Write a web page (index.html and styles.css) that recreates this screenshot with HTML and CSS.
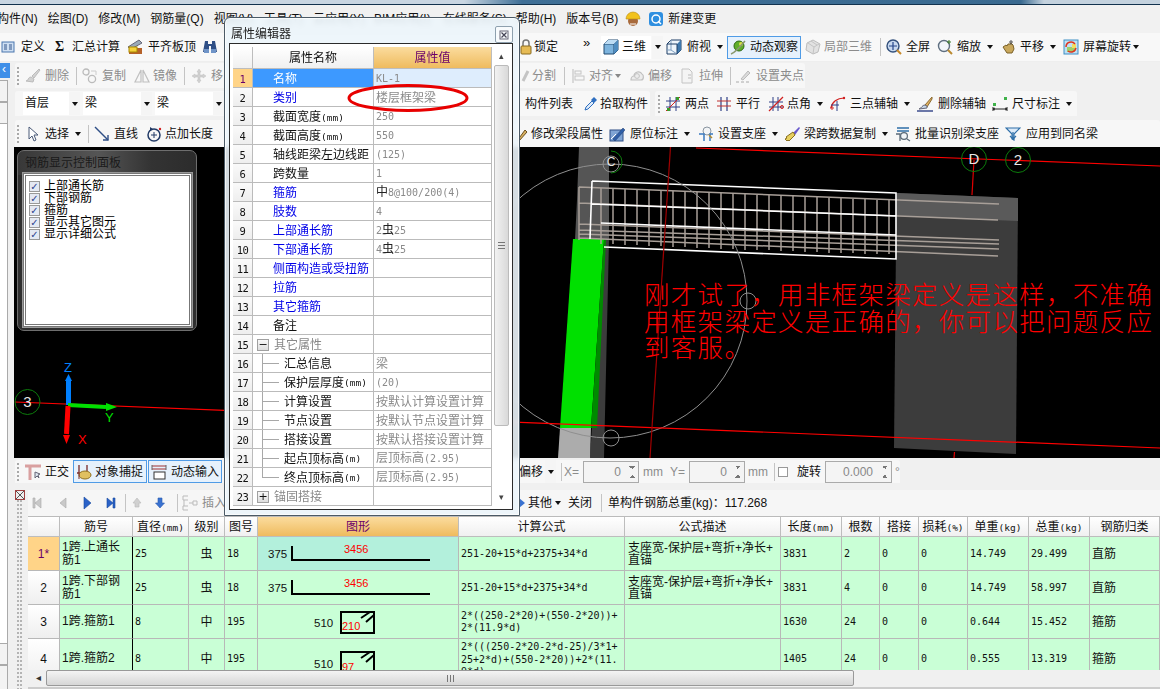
FILE: index.html
```html
<!DOCTYPE html>
<html lang="zh-CN">
<head>
<meta charset="utf-8">
<title>钢筋显示</title>
<link rel="stylesheet" href="styles.css">
</head>
<body>
<svg class="sprite" xmlns="http://www.w3.org/2000/svg">
  <symbol id="def" viewBox="0 0 16 16"><rect x="1" y="3" width="12" height="10" fill="#cfdff2" stroke="#4a76ae"/><path d="M3 6h3M3 8h3M3 10h3M8 6h3M8 8h3M8 10h3" stroke="#33558a"/></symbol>
  <symbol id="level" viewBox="0 0 16 16"><path d="M1 8 12 1l3 3L4 10z" fill="#9aa9b8" stroke="#667"/><rect x="2" y="9" width="13" height="6" fill="#b5622a"/><rect x="2" y="8" width="8" height="5" fill="#f4d23c" stroke="#a80"/></symbol>
  <symbol id="binoc" viewBox="0 0 16 16"><path d="M3 2h3v3h4V2h3l2 11H9V7H7v6H1z" fill="#2f4f86"/><rect x="2" y="10" width="5" height="4" fill="#6f94c8"/><rect x="9" y="10" width="5" height="4" fill="#6f94c8"/></symbol>
  <symbol id="lock" viewBox="0 0 16 16"><path d="M7 7V4a3 3 0 0 1 6 0v3" fill="none" stroke="#777" stroke-width="1.5"/><rect x="5" y="7" width="10" height="8" rx="1" fill="#e6bb55" stroke="#8a6a20"/></symbol>
  <symbol id="cube" viewBox="0 0 16 16"><path d="M1 5l4-4h10v10l-4 4H1z" fill="#7db4de" stroke="#234a70"/><path d="M1 5h10v10M11 5l4-4" fill="none" stroke="#234a70"/><path d="M1 5l4-4h10l-4 4z" fill="#bcdcf4"/><path d="M11 5l4-4v10l-4 4z" fill="#4e8cc0"/></symbol>
  <symbol id="topview" viewBox="0 0 16 16"><path d="M1 5l4-4h10v10l-4 4H1z" fill="#eef5fb" stroke="#1f3f66"/><path d="M5 1v10H1M5 11l6 4" fill="none" stroke="#7f9fc0"/><path d="M11 5l4-4v10l-4 4z" fill="#3f78ac"/><path d="M1 5h10v10" fill="none" stroke="#1f3f66"/></symbol>
  <symbol id="orbit" viewBox="0 0 16 16"><circle cx="9" cy="7" r="5" fill="#5fae2c" stroke="#2e6a16"/><circle cx="11" cy="5" r="2" fill="#d8e04a"/><path d="M1 15C4 14 10 8 15 2" fill="none" stroke="#8a9a70" stroke-width="1.6"/></symbol>
  <symbol id="local3d" viewBox="0 0 16 16"><path d="M8 1l7 4-2 8-5 2-7-4 1-7z" fill="#e2e2e2" stroke="#bdbdbd"/><path d="M3 4l6 4 5-3M9 8l-1 7M6 2l6 4" fill="none" stroke="#c4c4c4"/></symbol>
  <symbol id="full" viewBox="0 0 16 16"><circle cx="7" cy="7" r="6" fill="#c8d9ef" stroke="#33507c" stroke-width="1.4"/><path d="M7 3v8M3 7h8" stroke="#26468a" stroke-width="1.2"/><path d="M11 11l4 4" stroke="#c8892a" stroke-width="2"/></symbol>
  <symbol id="zoom" viewBox="0 0 16 16"><circle cx="7" cy="7" r="5.5" fill="#f2f6fa" stroke="#5f6f80" stroke-width="1.4"/><path d="M11 11l4 4" stroke="#bb8a30" stroke-width="2"/><path d="M12 1v4M10 3h4" stroke="#3a7a28"/></symbol>
  <symbol id="hand" viewBox="0 0 16 16"><path d="M2 8l3-2 1 1 1-2 2 0 1-1 2 2 1 4-2 4H6z" fill="#c9a85c" stroke="#7a6028"/><path d="M10 1v5M8 3h4" stroke="#555"/></symbol>
  <symbol id="rot" viewBox="0 0 16 16"><rect x="1" y="1" width="14" height="14" fill="#bfe0f4" stroke="#3f8fc4"/><rect x="4" y="8" width="8" height="5" fill="#9fcf6a"/><rect x="9" y="5" width="4" height="4" fill="#f4dc60"/><path d="M3 8a5 5 0 0 1 9-3M13 9a5 5 0 0 1-8 3" fill="none" stroke="#e0331e" stroke-width="1.5"/></symbol>
  <symbol id="del" viewBox="0 0 16 16"><path d="M14 1 7 8l2 2 6-8zM6 9c-2 0-3 2-3 3l-2 1 7 1 1-3z" fill="#d2d2d2" stroke="#bcbcbc"/></symbol>
  <symbol id="copy" viewBox="0 0 16 16"><circle cx="4" cy="4" r="3" fill="none" stroke="#bbb" stroke-width="1.3"/><circle cx="10" cy="11" r="3.6" fill="none" stroke="#bbb" stroke-width="1.3"/><path d="M9 3h5v4" fill="none" stroke="#ccc"/></symbol>
  <symbol id="mirror" viewBox="0 0 16 16"><path d="M7 2 1 14h6zM9 2l6 12H9z" fill="none" stroke="#c0c0c0" stroke-width="1.2"/></symbol>
  <symbol id="move" viewBox="0 0 16 16"><path d="M8 1l2 3H9v3h3V6l3 2-3 2V9H9v3h1l-2 3-2-3h1V9H4v1L1 8l3-2v1h3V4H6z" fill="#d0d0d0" stroke="#c0c0c0" stroke-width=".5"/></symbol>
  <symbol id="split" viewBox="0 0 16 16"><path d="M12 3 7 13" stroke="#c4c4c4" stroke-width="3"/></symbol>
  <symbol id="align" viewBox="0 0 16 16"><path d="M3 1v14" stroke="#bbb"/><rect x="5" y="3" width="6" height="3" fill="none" stroke="#c4c4c4"/><rect x="5" y="8" width="9" height="4" fill="none" stroke="#c4c4c4"/></symbol>
  <symbol id="offset" viewBox="0 0 16 16"><path d="M2 12c0-3 2-4 3-4 0-4 6-6 8-2 2 1 2 6-1 6z" fill="#ececec" stroke="#c0c0c0" stroke-width="1.2"/><circle cx="8" cy="8" r="2.4" fill="none" stroke="#c4c4c4"/></symbol>
  <symbol id="stretch" viewBox="0 0 16 16"><path d="M3 1h7l3 3v11H3z" fill="#f4f4f4" stroke="#c4c4c4"/><path d="M9 7h3M9 10h3" stroke="#bbb"/></symbol>
  <symbol id="grippt" viewBox="0 0 16 16"><path d="M6 11 13 3l2 2-7 7z" fill="#dadada" stroke="#bbb"/><path d="M1 14h3M6 14h3M11 14h3" stroke="#aaa"/></symbol>
  <symbol id="pick" viewBox="0 0 16 16"><path d="M3 14l1-3 6-6 2 2-6 6z" fill="#dce9f8" stroke="#2f6fc0"/><path d="M9 4l3-3 3 3-3 3z" fill="#2f6fc0"/></symbol>
  <symbol id="twopt" viewBox="0 0 16 16"><path d="M5 1v14M11 1v14M1 5h14M1 11h14" stroke="#2f3f86"/><path d="M1 15 15 1" stroke="#d02020"/><rect x="2" y="12" width="3" height="3" fill="#3a9a2a"/><rect x="11" y="1" width="3" height="3" fill="#3a9a2a"/></symbol>
  <symbol id="para" viewBox="0 0 16 16"><path d="M5 1v14M11 1v14" stroke="#2f3f86" stroke-width="1.2"/><path d="M1 5h14M1 10h14" stroke="#c03030" stroke-width="1.2"/></symbol>
  <symbol id="ang" viewBox="0 0 16 16"><path d="M5 1v14M10 1v14M1 6h14M1 11h14" stroke="#2f3f86"/><path d="M1 15 15 1" stroke="#d02020" stroke-width="1.3"/><circle cx="14" cy="11" r="1.5" fill="none" stroke="#d02020"/></symbol>
  <symbol id="arc" viewBox="0 0 16 16"><path d="M1 12C2 6 7 2 14 2" fill="none" stroke="#d02020" stroke-width="1.2"/><path d="M7 5v10M1 9h8" stroke="#2f3f86"/><circle cx="14" cy="2" r="1.2" fill="#d02020"/><circle cx="2" cy="12" r="1.2" fill="none" stroke="#d02020"/></symbol>
  <symbol id="delaux" viewBox="0 0 16 16"><path d="M15 1 8 9l2 2 5-8z" fill="#e0b060" stroke="#8a6a30"/><path d="M8 9c-3 0-3 3-6 4l8-1 0-2z" fill="#c8d8e8" stroke="#667"/><path d="M0 15h16" stroke="#2f3f86" stroke-width="1.4"/></symbol>
  <symbol id="dim" viewBox="0 0 16 16"><path d="M1 15V11M15 15V11M1 13h14M3 12l-2 1 2 1M13 12l2 1-2 1" fill="none" stroke="#222"/><rect x="1" y="7" width="3" height="3" fill="#3fb24a"/><rect x="12" y="1" width="3" height="3" fill="#3fb24a"/></symbol>
  <symbol id="select" viewBox="0 0 16 16"><path d="M4 1v12l3-3 2 5 2-1-2-5h4z" fill="#fff" stroke="#4a5a78"/></symbol>
  <symbol id="line" viewBox="0 0 16 16"><path d="M1 1 14 14" stroke="#2f4f86" stroke-width="1.4"/><path d="M9 14h5V9" fill="none" stroke="#2f4f86" stroke-width="1.4"/></symbol>
  <symbol id="ptlen" viewBox="0 0 16 16"><circle cx="8" cy="9" r="6" fill="none" stroke="#223a66" stroke-width="1.5"/><path d="M8 6v6M5 9h6" stroke="#223a66"/><path d="M4 1l3 2-3 2z" fill="#223a66"/><circle cx="14" cy="3" r="1.2" fill="#d02020"/></symbol>
  <symbol id="edit" viewBox="0 0 16 16"><path d="M4 15 12 4l2 2-8 9z" fill="#d8b060" stroke="#6a5020"/></symbol>
  <symbol id="origin" viewBox="0 0 16 16"><rect x="1" y="4" width="13" height="11" fill="#7fa4d4" stroke="#2f4f86"/><path d="M4 13 14 2l2 2L6 15z" fill="#2f5fa8" stroke="#1f3a6a" stroke-width=".5"/><path d="M2 13l5-5" stroke="#fff"/></symbol>
  <symbol id="support" viewBox="0 0 16 16"><circle cx="9" cy="5" r="4" fill="#f2f4f6" stroke="#8a95a0"/><path d="M1 8h5v7M15 8h-3v7" fill="none" stroke="#3a7ac0" stroke-width="1.5"/><path d="M11 9l3 3" stroke="#b08a30" stroke-width="1.5"/></symbol>
  <symbol id="broom" viewBox="0 0 16 16"><path d="M15 1 9 7l2 2 5-7z" fill="#6a5acd"/><path d="M9 6 2 11l1 1-2 1 2 2 1-1 1 1 6-6z" fill="#e8d060" stroke="#8a7020"/></symbol>
  <symbol id="batch" viewBox="0 0 16 16"><path d="M2 2h12M2 5h12" stroke="#2f6fa8" stroke-width="1.6"/><circle cx="9" cy="10" r="3.4" fill="#f0f4f8" stroke="#5a6a78" stroke-width="1.2"/><path d="M1 8h4v7M12 13l3 2" stroke="#5a6a78" fill="none" stroke-width="1.3"/></symbol>
  <symbol id="apply" viewBox="0 0 16 16"><path d="M1 2h14l-6 6v6l-2-1V8z" fill="#dceaf8" stroke="#2f6fa8" stroke-width="1.2"/><path d="M8 6v7l-3-3M8 13l3-3" fill="none" stroke="#2f6fa8" stroke-width="1.2"/></symbol>
  <symbol id="ortho" viewBox="0 0 16 16"><path d="M0 2h16M5 2v14" stroke="#d9a0a0" stroke-width="3"/><path d="M10 8v6l2-2 2 2-1-3 2-1z" fill="#dfe7f0" stroke="#667"/></symbol>
  <symbol id="snap" viewBox="0 0 16 16"><path d="M3 1v8M1 9h5M11 1v8" stroke="#7a2a2a" stroke-width="1.3" fill="none"/><ellipse cx="9" cy="11" rx="6" ry="4" fill="#e0c060" stroke="#907020"/><path d="M3 9v6" stroke="#7a2a2a"/></symbol>
  <symbol id="dyn" viewBox="0 0 16 16"><path d="M1 2h14M1 5h14" stroke="#a03030"/><path d="M1 1v5M15 1v5" stroke="#666"/><rect x="3" y="8" width="11" height="7" fill="#fff" stroke="#333"/></symbol>
  <symbol id="first" viewBox="0 0 16 16"><path d="M4 3h2v10H4zM12 3v10L6 8z" fill="#c9c9c9" stroke="#aaa" stroke-width=".6"/></symbol>
  <symbol id="prev" viewBox="0 0 16 16"><path d="M11 3v10L5 8z" fill="#c9c9c9" stroke="#aaa" stroke-width=".6"/></symbol>
  <symbol id="next" viewBox="0 0 16 16"><path d="M5 2v12l7-6z" fill="#2a62c8" stroke="#1a4aa0" stroke-width=".6"/></symbol>
  <symbol id="last" viewBox="0 0 16 16"><path d="M4 3v10l6-5zM10 3h2v10h-2z" fill="#2a62c8" stroke="#1a4aa0" stroke-width=".6"/></symbol>
  <symbol id="up" viewBox="0 0 16 16"><path d="M8 3l4 5H10v4H6V8H4z" fill="#d0d0d0" stroke="#b8b8b8" stroke-width=".6"/></symbol>
  <symbol id="down" viewBox="0 0 16 16"><path d="M6 3h4v5h2.500L8 13 3.500 8H6z" fill="#3a72d0" stroke="#2a5ab0" stroke-width=".6"/></symbol>
  <symbol id="insert" viewBox="0 0 16 16"><path d="M6 1H1v4h5M6 11H1v4h5M2 5v6M15 6v4h-4V6zM11 8H7" fill="none" stroke="#bbb"/></symbol>
</svg>

<div class="titlebar"></div>

<div class="menu">
  <span class="mi first">构件(N)</span>
  <span class="mi m10">绘图(D)</span>
  <span class="mi m10">修改(M)</span>
  <span class="mi m10">钢筋量(Q)</span>
  <span class="mi m10">视图(V)</span>
  <span class="mi m10">工具(T)</span>
  <span class="mi m10">云应用(Y)</span>
  <span class="mi m9">BIM应用(I)</span>
  <span class="mi m12">在线服务(S)</span>
  <span class="mi m9">帮助(H)</span>
  <span class="mi m10">版本号(B)</span>
  <svg class="i m7" viewBox="0 0 16 16"><circle cx="8" cy="10" r="5" fill="#a86a3c"/><path d="M1 8a7 7 0 0 1 14 0z" fill="#f2c21c" stroke="#b88a10" stroke-width=".6"/><path d="M5 13h6" stroke="#fff"/></svg>
  <svg class="i m7" viewBox="0 0 16 16"><rect x="1" y="1" width="14" height="14" rx="3" fill="#2f8fe0"/><circle cx="8" cy="8" r="4" fill="none" stroke="#fff" stroke-width="1.5"/><path d="M10 10l3 3" stroke="#fff" stroke-width="1.5"/></svg>
  <span class="mi m4">新建变更</span>
</div>

<div class="row1">
  <div class="hold h0">
    <span class="t m1"><svg class="i"><use href="#def"/></svg>定义</span>
    <span class="t g0 m10"><span class="sig">Σ</span>汇总计算</span>
    <span class="t g5 m7"><svg class="i"><use href="#level"/></svg>平齐板顶</span>
    <svg class="i m6"><use href="#binoc"/></svg>
  </div>
  <span class="t g2"><svg class="i"><use href="#lock"/></svg>锁定</span>
  <span class="more">»</span>
  <span class="t g3 wbtn m8"><svg class="i"><use href="#cube"/></svg>三维</span>
  <span class="dd m1"><i class="arr"></i></span>
  <span class="t g5 m3"><svg class="i"><use href="#topview"/></svg>俯视</span>
  <i class="arr m6"></i>
  <span class="t on m4"><svg class="i"><use href="#orbit"/></svg>动态观察</span>
  <span class="t g3 off m4"><svg class="i"><use href="#local3d"/></svg>局部三维</span>
  <i class="sep m8"></i>
  <span class="t m5"><svg class="i"><use href="#full"/></svg>全屏</span>
  <span class="t m7"><svg class="i"><use href="#zoom"/></svg>缩放</span>
  <i class="arr m6"></i>
  <span class="t g3 m8"><svg class="i"><use href="#hand"/></svg>平移</span>
  <i class="arr m6"></i>
  <span class="t m7"><svg class="i"><use href="#rot"/></svg>屏幕旋转</span>
  <i class="arr m2"></i>
</div>

<div class="work">
  <aside class="side">
    <div class="sidetab">‹</div>
    <div class="sideitem">&nbsp;</div>
    <div class="sideitem">&nbsp;</div>
    <div class="sidefill"></div>
    <div class="sideitem low">&nbsp;</div>
    <div class="sideitem low last">&nbsp;</div>
  </aside>

  <main class="content">
    <div class="row tall">
      <div class="bar w790">
        <div class="hold h2">
          <i class="grip m2"></i>
          <span class="t off m5"><svg class="i"><use href="#del"/></svg>删除</span>
          <i class="sep m7"></i>
          <span class="t off m5"><svg class="i"><use href="#copy"/></svg>复制</span>
          <span class="t g3 off m8"><svg class="i"><use href="#mirror"/></svg>镜像</span>
          <i class="sep m7"></i>
          <span class="t off m6"><svg class="i"><use href="#move"/></svg>移</span>
        </div>
        <span class="t g0 off"><svg class="i"><use href="#split"/></svg>分割</span>
        <i class="sep m8"></i>
        <span class="t g3 off m5"><svg class="i"><use href="#align"/></svg>对齐</span>
        <i class="arr grey m2"></i>
        <span class="t g3 off m8"><svg class="i"><use href="#offset"/></svg>偏移</span>
        <span class="t off m7"><svg class="i"><use href="#stretch"/></svg>拉伸</span>
        <i class="sep m7"></i>
        <span class="t g5 off m4"><svg class="i"><use href="#grippt"/></svg>设置夹点</span>
      </div>
    </div>

    <div class="row tall">
      <div class="bar w635">
        <div class="hold h3">
          <span class="combo c46 m8">首层</span><span class="dd"><i class="arr"></i></span>
          <span class="combo c58 m3">梁</span><span class="dd"><i class="arr"></i></span>
          <span class="combo c58 m3">梁</span><span class="dd"><i class="arr"></i></span>
        </div>
        <span class="t">构件列表</span>
        <span class="t g2 m9"><svg class="i"><use href="#pick"/></svg>拾取构件</span>
      </div>
      <div class="bar w422 m5">
        <i class="grip m3"></i>
        <span class="t m4"><svg class="i"><use href="#twopt"/></svg>两点</span>
        <span class="t m7"><svg class="i"><use href="#para"/></svg>平行</span>
        <span class="t g3 m8"><svg class="i"><use href="#ang"/></svg>点角</span>
        <i class="arr m6"></i>
        <span class="t m7"><svg class="i"><use href="#arc"/></svg>三点辅轴</span>
        <i class="arr m6"></i>
        <span class="t g5 m7"><svg class="i"><use href="#delaux"/></svg>删除辅轴</span>
        <span class="t m6"><svg class="i"><use href="#dim"/></svg>尺寸标注</span>
        <i class="arr m6"></i>
      </div>
    </div>

    <div class="row last">
      <div class="bar wfull">
        <div class="hold h4">
          <i class="grip m2"></i>
          <span class="t m5"><svg class="i"><use href="#select"/></svg>选择</span>
          <i class="arr m6"></i>
          <i class="sep m7"></i>
          <span class="t m5"><svg class="i"><use href="#line"/></svg>直线</span>
          <span class="t g3 m8"><svg class="i"><use href="#ptlen"/></svg>点加长度</span>
        </div>
        <span class="t g2"><svg class="i"><use href="#edit"/></svg>修改梁段属性</span>
        <span class="t g5 m6"><svg class="i"><use href="#origin"/></svg>原位标注</span>
        <i class="arr m6"></i>
        <span class="t m8"><svg class="i"><use href="#support"/></svg>设置支座</span>
        <i class="arr m6"></i>
        <span class="t m6"><svg class="i"><use href="#broom"/></svg>梁跨数据复制</span>
        <i class="arr m6"></i>
        <span class="t m7"><svg class="i"><use href="#batch"/></svg>批量识别梁支座</span>
        <span class="t g5 m6"><svg class="i"><use href="#apply"/></svg>应用到同名梁</span>
      </div>
    </div>

    <div class="canvas">
      <svg class="scene" viewBox="14 147 1146 311" xmlns="http://www.w3.org/2000/svg">
        <polygon points="896.5,193 1018,198 1016,454 894,448" fill="#3c3c3c"/>
        <polygon points="896.5,193 1018,198 1018,221 896,216" fill="#5a5a5a"/>
        <polygon points="609,147 609,240 604,458 590,458 604,239" fill="#3c3c3c"/>
        <polygon points="579,147 609,147 609,240 575,240 577,200" fill="#555"/>
        <polygon points="573,239 604,239 591,428 560,428" fill="#00e000"/>
        <polygon points="604,239 606,239 597,428 591,428" fill="#008a00"/>
        <polygon points="560,428 591,428 590,458 558,458" fill="#acacac"/>
        <g fill="none" stroke="#a89f98" stroke-width="1.5">
          <path d="M579 187 999 204M579 203 998 220M579 224 999 240M579 230 999 244M579 234 999 249M579 238 998 256M579 187V240"/>
          <path d="M601 188V244M613 189V244M625 189V245M637 190V245M649 190V246M661 191V246M673 191V247M685 192V247M697 192V248M709 193V248M721 193V249M733 194V249M745 194V250M757 195V250M769 195V250M781 196V251M793 196V251M805 197V252M817 197V252M829 198V253M841 198V253M853 199V253M865 199V254M877 200V254M889 200V254"/>
        </g>
        <g fill="none" stroke="#fff" stroke-width="1.6">
          <path d="M592 181 896 193V259L604 247M592 181 590 239M592 204 896 216M601 223 896 235"/>
        </g>
        <g fill="none" stroke="#8f8f8f">
          <circle cx="610" cy="301" r="137"/>
          <circle cx="611" cy="164" r="8"/>
          <circle cx="748" cy="301" r="8"/>
          <circle cx="611" cy="438" r="8"/>
        </g>
        <g fill="none" stroke-width="1.2">
          <path d="M696 148 1160 166" stroke="#f00"/>
          <path d="M15 402 1160 448" stroke="#f00"/>
          <path d="M670.500 147 650 458" stroke="#a00000"/>
          <path d="M974 160 972 195" stroke="#e00000"/>
          <path d="M954.500 452 954 458" stroke="#e00000"/>
        </g>
        <g fill="none" stroke="#0c7c0c">
          <circle cx="27.500" cy="402" r="12.500"/>
          <circle cx="974" cy="159" r="12.500"/>
          <circle cx="1018" cy="160" r="12.500"/>
          <path d="M611 151a11 11 0 0 1 0 22"/>
        </g>
        <g class="axisno" fill="#e8e8e8">
          <text x="27.500" y="407">3</text>
          <text x="974" y="164">D</text>
          <text x="1018" y="165">2</text>
          <text x="611" y="166" class="small">C</text>
        </g>
        <path d="M68.500 405V379" stroke="#0080ff" stroke-width="5"/>
        <path d="M68.500 374l3.500 7h-7z" fill="#0080ff"/>
        <path d="M68 405 106 407" stroke="#00e000" stroke-width="4"/>
        <path d="M117 407l-11 4v-8z" fill="#00e000"/>
        <path d="M68 406 66.500 434" stroke="#f00" stroke-width="5"/>
        <path d="M66.500 444l-3.500-9h7z" fill="#f00"/>
        <text class="axis" x="64" y="372" fill="#0080ff">Z</text>
        <text class="axis" x="105" y="422" fill="#00e000">Y</text>
        <text class="axis" x="78" y="444" fill="#f00">X</text>
      </svg>

      <div class="note">刚才试了，用非框架梁定义是这样，不准确<br>用框架梁定义是正确的，你可以把问题反应<br>到客服。</div>

      <section class="panel">
        <h4 class="panel-title">钢筋显示控制面板</h4>
        <div class="panel-box">
          <label class="chk"><i class="box">✓</i>上部通长筋</label>
          <label class="chk"><i class="box">✓</i>下部钢筋</label>
          <label class="chk"><i class="box">✓</i>箍筋</label>
          <label class="chk"><i class="box">✓</i>显示其它图元</label>
          <label class="chk"><i class="box">✓</i>显示详细公式</label>
        </div>
      </section>
    </div>

    <div class="status">
      <div class="bar status-bar">
        <div class="hold h2">
          <i class="grip m2"></i>
          <span class="t m5"><svg class="i"><use href="#ortho"/></svg>正交</span>
          <span class="t g3 on m4"><svg class="i"><use href="#snap"/></svg>对象捕捉</span>
          <span class="t on m1"><svg class="i"><use href="#dyn"/></svg>动态输入</span>
        </div>
        <span class="t m3">偏移</span>
        <span class="dd m2"><i class="arr"></i></span>
        <i class="sep m5"></i>
        <span class="lbl off m2">X=</span>
        <span class="spin m3">0<b class="sb"></b></span>
        <span class="off m4">mm</span>
        <span class="lbl off m7">Y=</span>
        <span class="spin m3">0<b class="sb"></b></span>
        <span class="off m3">mm</span>
        <i class="sep m6"></i>
        <i class="cb m3"></i>
        <span class="t m9">旋转</span>
        <span class="spin wide m4">0.000<b class="sb"></b></span>
        <span class="off m3">°</span>
      </div>
    </div>

    <div class="lower">
      <div class="gripcol"><svg class="closex" viewBox="0 0 10 10"><rect x=".5" y=".5" width="9" height="9" fill="#eee" stroke="#a04040"/><path d="M1 1l8 8M9 1 1 9" stroke="#555"/></svg><i class="dots"></i></div>
      <div class="gridside">
        <div class="nav">
          <div class="hold h5">
            <svg class="i m1"><use href="#first"/></svg>
            <svg class="i m10"><use href="#prev"/></svg>
            <svg class="i m8"><use href="#next"/></svg>
            <svg class="i m8"><use href="#last"/></svg>
            <i class="sep m6"></i>
            <svg class="i m3"><use href="#up"/></svg>
            <svg class="i m7"><use href="#down"/></svg>
            <i class="sep m9"></i>
            <span class="t off m4"><svg class="i"><use href="#insert"/></svg>插入</span>
          </div>
          <svg class="tip" viewBox="0 0 10 16"><path d="M3 3l6 5-6 5z" fill="#3a72d0"/></svg>
          <span class="m2">其他</span>
          <i class="arr m3"></i>
          <span class="m7">关闭</span>
          <i class="sep m9"></i>
          <span class="m6">单构件钢筋总重(kg)：117.268</span>
        </div>

        <div class="gridwrap">
          <table class="grid">
            <colgroup><col class="g1"><col class="g2c"><col class="g3c"><col class="g4c"><col class="g5c"><col class="g6c"><col class="g7c"><col class="g8c"><col class="g9c"><col class="g10c"><col class="g11c"><col class="g12c"><col class="g13c"><col class="g14c"><col class="g15c"></colgroup>
            <thead>
              <tr>
                <th></th><th>筋号</th><th>直径<span class="mm">(mm)</span></th><th>级别</th><th>图号</th><th class="hot">图形</th><th>计算公式</th><th>公式描述</th><th>长度<span class="mm">(mm)</span></th><th>根数</th><th>搭接</th><th>损耗<span class="mm">(%)</span></th><th>单重<span class="mm">(kg)</span></th><th>总重<span class="mm">(kg)</span></th><th>钢筋归类</th>
              </tr>
            </thead>
            <tbody>
              <tr>
                <td class="rh cur">1*</td><td class="nm">1跨.上通长<br>筋1</td><td class="n">25</td><td class="c">虫</td><td class="n">18</td>
                <td class="shape sel"><svg class="sh" viewBox="-1 0 200 33"><text class="dim" x="9" y="21">375</text><path class="bar-l" d="M33 9V23H171"/><text class="red" x="85" y="16">3456</text></svg></td>
                <td class="n">251-20+15*d+2375+34*d</td><td class="ds">支座宽-保护层+弯折+净长+<br>直锚</td><td class="n">3831</td><td class="n">2</td><td class="n">0</td><td class="n">0</td><td class="n">14.749</td><td class="n">29.499</td><td class="cat">直筋</td>
              </tr>
              <tr>
                <td class="rh">2</td><td class="nm">1跨.下部钢<br>筋1</td><td class="n">25</td><td class="c">虫</td><td class="n">18</td>
                <td class="shape"><svg class="sh" viewBox="-1 0 200 33"><text class="dim" x="9" y="21">375</text><path class="bar-l" d="M33 9V23H171"/><text class="red" x="85" y="16">3456</text></svg></td>
                <td class="n">251-20+15*d+2375+34*d</td><td class="ds">支座宽-保护层+弯折+净长+<br>直锚</td><td class="n">3831</td><td class="n">4</td><td class="n">0</td><td class="n">0</td><td class="n">14.749</td><td class="n">58.997</td><td class="cat">直筋</td>
              </tr>
              <tr>
                <td class="rh">3</td><td class="nm">1跨.箍筋1</td><td class="n">8</td><td class="c">中</td><td class="n">195</td>
                <td class="shape"><svg class="sh" viewBox="-1 0 200 33"><text class="dim" x="55" y="22">510</text><path class="bar-l" d="M82 7H115V28H82ZM102 13 111 7M107 17 115 10"/><text class="red" x="83" y="25">210</text></svg></td>
                <td class="n fm">2*((250-2*20)+(550-2*20))+<br>2*(11.9*d)</td><td class="ds"></td><td class="n">1630</td><td class="n">24</td><td class="n">0</td><td class="n">0</td><td class="n">0.644</td><td class="n">15.452</td><td class="cat">箍筋</td>
              </tr>
              <tr>
                <td class="rh">4</td><td class="nm">1跨.箍筋2</td><td class="n">8</td><td class="c">中</td><td class="n">195</td>
                <td class="shape"><svg class="sh" viewBox="-1 0 200 33"><text class="dim" x="55" y="26">510</text><path class="bar-l" d="M82 34V10H115V34M102 16 111 10M107 20 115 13"/><text class="red" x="83" y="29">97</text></svg></td>
                <td class="n fm top">2*(((250-2*20-2*d-25)/3*1+<br>25+2*d)+(550-2*20))+2*(11.<br>9*d)</td><td class="ds"></td><td class="n">1405</td><td class="n">24</td><td class="n">0</td><td class="n">0</td><td class="n">0.555</td><td class="n">13.319</td><td class="cat">箍筋</td>
              </tr>
            </tbody>
          </table>
        </div>

        <div class="hscroll"><span class="sbtn">◂</span><span class="thumb"><i class="hgrip"></i></span></div>
      </div>
    </div>
  </main>
</div>

<section class="dlg">
  <header class="dlg-head"><span class="dlg-title">属性编辑器</span><span class="dlg-x"><svg viewBox="0 0 10 10"><rect x="1" y="1" width="8" height="8" fill="none" stroke="#667"/><path d="M2.500 2.500l5 5M7.500 2.500l-5 5" stroke="#445" stroke-width="1.200"/></svg></span></header>
  <div class="dlg-body">
    <table class="prop">
      <colgroup><col class="p1"><col class="p2"><col class="p3"></colgroup>
      <thead><tr><th></th><th>属性名称</th><th class="hot">属性值</th></tr></thead>
      <tbody>
        <tr class="cur"><td class="rn">1</td><td class="pn">名称</td><td class="pv"><span class="v">KL-1</span></td></tr>
        <tr><td class="rn">2</td><td class="pn blue">类别</td><td class="pv">楼层框架梁</td></tr>
        <tr><td class="rn">3</td><td class="pn">截面宽度<span class="mm">(mm)</span></td><td class="pv"><span class="v">250</span></td></tr>
        <tr><td class="rn">4</td><td class="pn">截面高度<span class="mm">(mm)</span></td><td class="pv"><span class="v">550</span></td></tr>
        <tr><td class="rn">5</td><td class="pn">轴线距梁左边线距</td><td class="pv"><span class="v">(125)</span></td></tr>
        <tr><td class="rn">6</td><td class="pn">跨数量</td><td class="pv"><span class="v">1</span></td></tr>
        <tr><td class="rn">7</td><td class="pn blue">箍筋</td><td class="pv"><span class="sym">中</span><span class="v">8@100/200(4)</span></td></tr>
        <tr><td class="rn">8</td><td class="pn blue">肢数</td><td class="pv"><span class="v">4</span></td></tr>
        <tr><td class="rn">9</td><td class="pn blue">上部通长筋</td><td class="pv"><span class="v">2</span><span class="sym">虫</span><span class="v">25</span></td></tr>
        <tr><td class="rn">10</td><td class="pn blue">下部通长筋</td><td class="pv"><span class="v">4</span><span class="sym">虫</span><span class="v">25</span></td></tr>
        <tr><td class="rn">11</td><td class="pn blue">侧面构造或受扭筋</td><td class="pv"></td></tr>
        <tr><td class="rn">12</td><td class="pn blue">拉筋</td><td class="pv"></td></tr>
        <tr><td class="rn">13</td><td class="pn blue">其它箍筋</td><td class="pv"></td></tr>
        <tr><td class="rn">14</td><td class="pn">备注</td><td class="pv"></td></tr>
        <tr><td class="rn">15</td><td class="pn grp"><span class="node"><i class="exp">−</i>其它属性</span></td><td class="pv"></td></tr>
        <tr><td class="rn">16</td><td class="pn sub"><span class="node"><i class="tree"></i>汇总信息</span></td><td class="pv">梁</td></tr>
        <tr><td class="rn">17</td><td class="pn sub"><span class="node"><i class="tree"></i>保护层厚度<span class="mm">(mm)</span></span></td><td class="pv"><span class="v">(20)</span></td></tr>
        <tr><td class="rn">18</td><td class="pn sub"><span class="node"><i class="tree"></i>计算设置</span></td><td class="pv">按默认计算设置计算</td></tr>
        <tr><td class="rn">19</td><td class="pn sub"><span class="node"><i class="tree"></i>节点设置</span></td><td class="pv">按默认节点设置计算</td></tr>
        <tr><td class="rn">20</td><td class="pn sub"><span class="node"><i class="tree"></i>搭接设置</span></td><td class="pv">按默认搭接设置计算</td></tr>
        <tr><td class="rn">21</td><td class="pn sub"><span class="node"><i class="tree"></i>起点顶标高<span class="mm">(m)</span></span></td><td class="pv">层顶标高<span class="v">(2.95)</span></td></tr>
        <tr><td class="rn">22</td><td class="pn sub"><span class="node"><i class="tree end"></i>终点顶标高<span class="mm">(m)</span></span></td><td class="pv">层顶标高<span class="v">(2.95)</span></td></tr>
        <tr><td class="rn">23</td><td class="pn grp"><span class="node"><i class="exp">+</i>锚固搭接</span></td><td class="pv"></td></tr>
      </tbody>
    </table>
    <div class="vscroll"><span class="vbtn">▴</span><span class="vthumb"><i class="vgrip"></i></span><span class="vbtn dn">▾</span></div>
  </div>
</section>

<svg class="ring" viewBox="0 0 124 30" xmlns="http://www.w3.org/2000/svg"><ellipse cx="62" cy="15" rx="59" ry="12.500" fill="none" stroke="#e80000" stroke-width="3"/></svg>
</body>
</html>
```

FILE: styles.css
```css
* { box-sizing: border-box; }
html, body { margin: 0; padding: 0; }
body {
  position: relative;
  width: 1160px;
  height: 689px;
  overflow: hidden;
  display: flex;
  flex-direction: column;
  background: #f0f0f0;
  color: #111;
  font: 12px/16px "Liberation Sans", "Noto Sans CJK SC", sans-serif;
}
.sprite { display: none; }
i { font-style: normal; }

.m1 { margin-left: 1px; } .m2 { margin-left: 2px; } .m3 { margin-left: 3px; }
.m4 { margin-left: 4px; } .m5 { margin-left: 5px; } .m6 { margin-left: 6px; }
.m7 { margin-left: 7px; } .m8 { margin-left: 8px; } .m9 { margin-left: 9px; }
.m10 { margin-left: 10px; } .m12 { margin-left: 12px; }

.titlebar {
  flex: none;
  height: 5px;
  background: linear-gradient(90deg, #c9d6e2 0, #c9d6e2 40%, #3f6f96 45%, #3a6a90 88%, #c4d2de 90%);
  border-bottom: 1px solid #12324e;
}
.menu {
  flex: none;
  height: 28px;
  display: flex;
  align-items: center;
  background: #f1f1f1;
  white-space: nowrap;
}
.mi.first { margin-left: -3px; }

.t { display: flex; align-items: center; gap: 4px; white-space: nowrap; flex: none; }
.g0 { gap: 0; } .g2 { gap: 2px; } .g3 { gap: 3px; } .g5 { gap: 5px; }
.i { width: 16px; height: 16px; flex: none; display: block; }
.off { color: #8c8c8c; }
.arr { display: block; flex: none; width: 6px; height: 0; border: 3px solid transparent; border-top: 4px solid #111; border-bottom: 0; }
.arr.grey { border-top-color: #888; }
.sep { display: block; flex: none; width: 1px; height: 18px; background: #c4c4c4; }
.grip {
  display: block; flex: none; width: 3px; height: 18px;
  background: radial-gradient(circle at 1px 1px, #a8a8a8 1px, transparent 1.2px) 0 0 / 3px 4px;
}
.more { margin-left: 25px; width: 10px; flex: none; font-size: 13px; margin-top: -8px; }
.sig { width: 17px; font: bold 14px "Liberation Serif", serif; }
.hold { display: flex; align-items: center; flex: none; height: 100%; }
.h0 { width: 516px; }
.h2 { width: 501px; }
.h3 { width: 510px; }
.h4 { width: 498px; }
.h5 { width: 488px; }

.row1 {
  flex: none;
  height: 29px;
  display: flex;
  align-items: center;
  background: #f8f8f8;
  border-bottom: 1px solid #eee;
}
.wbtn { height: 23px; padding: 0 5px 0 2px; background: #fff; }
.dd { display: flex; align-items: center; justify-content: center; flex: none; width: 11px; height: 23px; background: #f5f5f5; }
.on { height: 23px; width: 74px; padding-left: 2px; border: 1px solid #4f9be6; background: #e6f1fc; }

.work { flex: 1; display: flex; min-height: 0; }
.side { flex: none; width: 14px; display: flex; flex-direction: column; padding-top: 1px; }
.sidetab { flex: none; width: 10px; height: 15px; background: #3f8fe8; color: #fff; font-size: 12px; line-height: 13px; margin-bottom: 2px; padding-left: 2px; }
.sideitem { flex: none; width: 8px; height: 22px; background: #f3f3f3; border: 1px solid #aaa; border-left: 0; border-top-color: #aaa; }
.sideitem.low { height: 22px; }
.sideitem.last { height: 24px; border-bottom: 0; }
.sidefill { flex: 1; width: 8px; background: #fff; border-right: 1px solid #aaa; }

.content { flex: 1; min-width: 0; display: flex; flex-direction: column; }
.row { flex: none; display: flex; align-items: stretch; padding-left: 1px; }
.tall { height: 28px; padding-top: 1px; padding-bottom: 2px; }
.row.last { height: 29px; padding-top: 2px; }
.bar { display: flex; align-items: center; flex: none; background: #f7f7f7; border-radius: 3px 3px 0 0; }
.w790 { width: 790px; }
.w635 { width: 635px; }
.w422 { width: 422px; }
.wfull { width: 1145px; }
.combo { flex: none; height: 23px; line-height: 23px; padding-left: 2px; background: #fff; }
.c46 { width: 46px; }
.c58 { width: 58px; }

.canvas { position: relative; flex: none; height: 311px; background: #000; overflow: hidden; }
.scene { display: block; width: 1146px; height: 311px; }
.axisno text { font: 15px "Liberation Sans", sans-serif; text-anchor: middle; }
.axisno .small { font-size: 12px; }
.axis { font: 13px "Liberation Sans", sans-serif; }
.note {
  position: absolute;
  left: 630px;
  top: 133px;
  color: #f00;
  white-space: nowrap;
  letter-spacing: 1.300px;
  font: 300 25.500px/26.700px "Noto Sans CJK SC", sans-serif;
}
.panel {
  position: absolute;
  left: 3px;
  top: 3px;
  width: 180px;
  height: 181px;
  padding: 3px 4px 4px 5px;
  border: 1px solid #6e6e6e;
  border-radius: 7px;
  background: linear-gradient(90deg, #383838 0, #555 45%, #333 75%, #2c2c2c 100%) 0 0 / 100% 24px no-repeat, #2f2f2f;
}
.panel-title { margin: 0 0 3px 2px; height: 16px; font: 400 12px/16px "Noto Sans CJK SC", sans-serif; color: #1a1a1a; }
.panel-box { height: 154px; padding: 4px 0 0 3px; background: #fff; border: 3px double #777; outline: 1px solid #999; }
.chk { display: flex; align-items: center; height: 12px; line-height: 12px; color: #000; white-space: nowrap; }
.box {
  flex: none; width: 11px; height: 11px; margin-right: 4px;
  border: 1px solid #999; background: #e4e8f2; color: #2a3f90;
  font: bold 10px/9px "DejaVu Sans", sans-serif; text-align: center;
}

.status { flex: none; height: 32px; padding: 2px 0 7px 1px; display: flex; background: #f0f0f0; }
.status-bar { width: 885px; }
.status .on { width: 74px; }
.lbl { flex: none; width: 16px; }
.spin {
  position: relative; flex: none; width: 56px; height: 22px; line-height: 20px;
  padding-right: 17px; text-align: right; font-size: 12px; color: #888;
  border: 1px solid #aaa; background: #f4f4f4;
}
.spin.wide { width: 67px; padding-right: 18px; }
.sb { position: absolute; right: 3px; top: 4px; width: 6px; height: 12px;
  background:
    linear-gradient(45deg, transparent 50%, #777 50%) 0 0 / 3px 3px no-repeat,
    linear-gradient(-45deg, transparent 50%, #777 50%) 3px 0 / 3px 3px no-repeat,
    linear-gradient(135deg, transparent 50%, #777 50%) 0 9px / 3px 3px no-repeat,
    linear-gradient(-135deg, transparent 50%, #777 50%) 3px 9px / 3px 3px no-repeat;
}
.cb { display: block; flex: none; width: 10px; height: 10px; border: 1px solid #999; background: #fff; }

.lower { flex: 1; min-height: 0; display: flex; }
.gripcol { flex: none; width: 14px; padding-left: 1px; display: flex; flex-direction: column; }
.closex { display: block; flex: none; width: 10px; height: 10px; }
.dots {
  display: block; flex: 1; margin-left: 2px; width: 6px;
  background: radial-gradient(circle at 1px 1px, #b4b4b4 .9px, transparent 1.1px) 0 0 / 3px 4px;
}
.gridside { flex: 1; min-width: 0; display: flex; flex-direction: column; border-bottom: 2px solid #ccc; }
.nav { flex: none; height: 27px; padding-bottom: 1px; display: flex; align-items: center; background: #f6f6f6; white-space: nowrap; border-bottom: 1px solid #bbb; }
.tip { display: block; flex: none; width: 10px; height: 16px; }

.gridwrap { flex: none; height: 153px; overflow: hidden; background: #fff; }
table { border-collapse: separate; border-spacing: 0; table-layout: fixed; }
.grid { width: 1132px; }
.g1 { width: 32px; } .g2c { width: 73px; } .g3c { width: 56px; } .g4c { width: 36px; } .g5c { width: 33px; }
.g6c { width: 201px; } .g7c { width: 166px; } .g8c { width: 156px; } .g9c { width: 61px; } .g10c { width: 38px; }
.g11c { width: 39px; } .g12c { width: 49px; } .g13c { width: 61px; } .g14c { width: 61px; } .g15c { width: 70px; }
th { padding: 1px 0 0; font-weight: 400; line-height: 16px; text-align: center; background: linear-gradient(#fff, #f0f0f0); border-right: 1px solid #bdbdbd; border-bottom: 1px solid #bdbdbd; white-space: nowrap; overflow: hidden; }
th.hot { background: linear-gradient(#fbdc9e, #efbb5e); color: #6a006a; }
.grid thead tr { height: 20px; }
.grid tbody tr { height: 34px; }
.grid td { padding: 0 0 0 2px; background: #c9ffd6; border-right: 1px solid #b8b8b8; border-bottom: 1px solid #b8b8b8; line-height: 12px; overflow: hidden; white-space: nowrap; }
.grid td.rh { padding: 0; text-align: center; background: linear-gradient(#fff, #efefef); }
.grid td.cur { background: #ffd488; color: #6a006a; }
.grid td.nm { border-right-color: #000; line-height: 13px; }
.n, .mm, .v { font-family: "DejaVu Sans Mono", "Liberation Mono", monospace; font-size: 10px; }
.mm { font-size: 9.500px; color: inherit; }
.grid td.n { line-height: 12px; }
.grid td.c { padding: 0; text-align: center; }
.grid td.ds { line-height: 12px; padding-left: 3px; }
.grid td.top { vertical-align: top; padding-top: 2px; line-height: 12.500px; }
.grid td.shape { padding: 0; }
.grid td.sel { background: #b3f0dc; }
.sh { display: block; width: 200px; height: 33px; overflow: hidden; }
.dim { font: 11.500px "Liberation Sans", sans-serif; fill: #111; }
.red { font: 11px "Liberation Sans", sans-serif; fill: #f00; }
.bar-l { fill: none; stroke: #000; stroke-width: 2; }

.hscroll { flex: none; height: 16px; display: flex; background: #f0f0f0; padding-left: 2px; }
.sbtn { flex: none; width: 16px; font-size: 10px; line-height: 15px; text-align: center; color: #333; }
.thumb { flex: none; width: 808px; height: 16px; border: 1px solid #999; border-radius: 2px; background: linear-gradient(#f4f4f4, #d6d6d6); display: flex; justify-content: center; align-items: center; }
.hgrip { display: block; width: 7px; height: 7px; background: repeating-linear-gradient(90deg, #777 0 1px, transparent 1px 3px); }

.dlg {
  position: absolute;
  left: 224px;
  top: 17px;
  width: 296px;
  height: 499px;
  padding: 0 6px 0 4px;
  border: 1px solid #4b5a66;
  border-radius: 6px 6px 0 0;
  background: rgba(236, 245, 251, .9);
  backdrop-filter: blur(2.500px);
  box-shadow: inset 0 0 0 1px rgba(255, 255, 255, .7);
}
.dlg-head { height: 25px; display: flex; align-items: center; justify-content: space-between; padding-top: 3px; }
.dlg-title { margin-left: 2px; font: 12px "Noto Sans CJK SC", sans-serif; color: #222; }
.dlg-x { width: 18px; height: 17px; margin-top: 5px; display: flex; align-items: center; justify-content: center; border: 1px solid #8ea0ae; border-radius: 2px; background: rgba(255, 255, 255, .6); }
.dlg-x svg { display: block; width: 10px; height: 10px; }
.dlg-body { display: flex; height: 467px; padding: 3px 1px 3px 3px; background: #fff; border: 1px solid #2b2b2b; }
.prop { width: 259px; flex: none; height: 459px; }
.p1 { width: 20px; } .p2 { width: 121px; } .p3 { width: 118px; }
.prop thead tr { height: 22px; }
.prop tbody tr { height: 19px; }
.prop td { padding: 1px 0 0; height: 19px; border-right: 1px solid #bbb; border-bottom: 1px solid #bbb; line-height: 14px; white-space: nowrap; overflow: hidden; background: #fff; }
.prop .rn { text-align: center; font: 10.500px/14px "DejaVu Sans Mono", monospace; background: linear-gradient(#fafafa, #eee); letter-spacing: -.5px; }
.prop .pn { padding-left: 20px; padding-top: 2px; }
.prop .pv { padding-left: 2px; color: #8a8a8a; }
.prop .blue { color: #0000e8; }
.prop .grp { padding-left: 4px; padding-top: 0; color: #888; }
.prop .sub { padding-left: 0; padding-top: 0; }
.prop tr.cur .rn { background: #ffd488; color: #6a006a; }
.prop tr.cur .pn { background: #3d99ff; color: #fff; }
.prop tr.cur .pv { background: #deedfd; }
.node { display: flex; align-items: center; height: 18px; padding-top: 1px; }
.exp { flex: none; width: 12px; height: 12px; margin: 0 5px 0 0; border: 1px solid #a0a0a0; background: linear-gradient(#f8f8f8, #ddd); color: #111; font: 11px/10px "DejaVu Sans", sans-serif; text-align: center; }
.tree {
  flex: none; align-self: stretch; width: 31px; margin-top: -1px;
  background:
    linear-gradient(#a8a8a8, #a8a8a8) 9px 0 / 1px 100% no-repeat,
    linear-gradient(#a8a8a8, #a8a8a8) 9px 9px / 17px 1px no-repeat;
}
.tree.end { background:
    linear-gradient(#a8a8a8, #a8a8a8) 9px 0 / 1px 10px no-repeat,
    linear-gradient(#a8a8a8, #a8a8a8) 9px 9px / 17px 1px no-repeat;
}
.sym { color: #222; }
.vscroll { flex: 1; display: flex; flex-direction: column; align-items: center; padding: 0 1px; }
.vbtn { flex: none; height: 18px; font-size: 9px; line-height: 18px; color: #444; }
.vbtn.dn { margin-top: auto; }
.vthumb { flex: none; width: 15px; height: 361px; border: 1px solid #bbb; border-radius: 2px; background: linear-gradient(90deg, #f2f2f2, #d9d9d9); display: flex; align-items: center; justify-content: center; }
.vgrip { display: block; width: 7px; height: 7px; background: repeating-linear-gradient(#777 0 1px, transparent 1px 3px); }

.ring { position: absolute; left: 346px; top: 83px; width: 124px; height: 30px; }
```
